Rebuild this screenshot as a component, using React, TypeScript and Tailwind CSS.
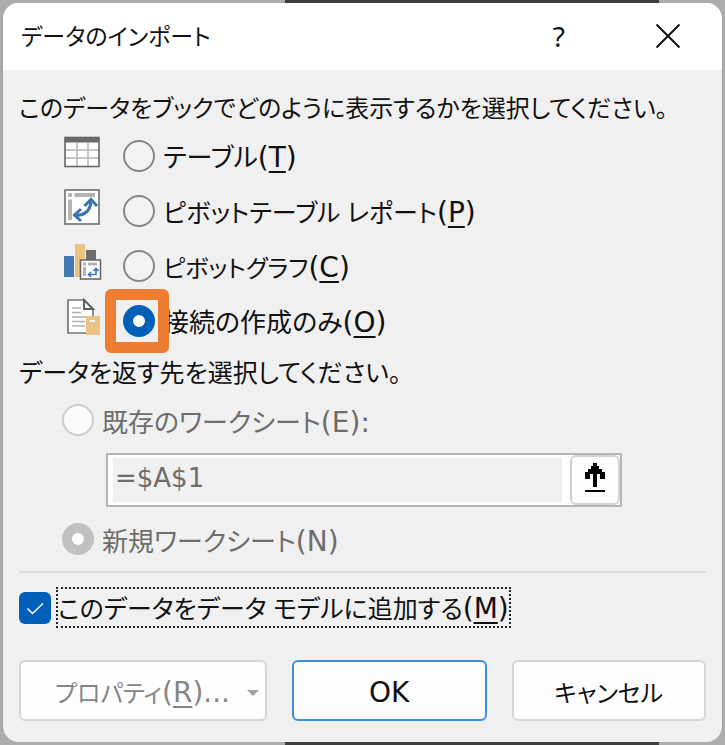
import type { ReactNode } from 'react';

const radioBase =
  'h-8 w-8 shrink-0 appearance-none rounded-full border-2 border-[#868686] bg-[#f2f2f2] checked:border-[10px] checked:border-[#005fb8] checked:bg-white disabled:border-[#cccccc] disabled:bg-[#fbfbfb] disabled:checked:border-[#c0c0c0] disabled:checked:bg-white';

function Latin({ children }: { children: ReactNode }) {
  return <span className="font-['DejaVu_Sans',sans-serif] text-[28px] leading-none">{children}</span>;
}

function Key({ children }: { children: ReactNode }) {
  return <span className="underline decoration-2 underline-offset-4">{children}</span>;
}

function TableIcon() {
  return (
    <svg width="36" height="32" viewBox="0 0 36 32" aria-hidden="true">
      <rect x="1" y="1.5" width="34" height="29" fill="#fff" />
      <path d="M1 14H35M1 22H35M13 7V30M24 7V30" stroke="#b5b5b5" strokeWidth="1.5" />
      <rect x="1" y="1.5" width="34" height="29" fill="none" stroke="#686868" strokeWidth="1.6" />
      <rect x="1" y="1.5" width="34" height="5" fill="#686868" />
    </svg>
  );
}

function PivotTableIcon() {
  return (
    <svg width="36" height="36" viewBox="0 0 36 36" aria-hidden="true">
      <rect x="1" y="1" width="34" height="34" fill="#fff" stroke="#767676" strokeWidth="1.7" />
      <path d="M4 4H8V8H4ZM10.500 4H31V8H10.500ZM4 10.500H8V31H4Z" fill="#b3b3b3" />
      <path d="M11 26C20 27 27 22 27 11M20.500 17L27 10.500L33 17M17 20L10.500 26L17 32" fill="none" stroke="#3b74b1" strokeWidth="3" />
    </svg>
  );
}

function PivotChartIcon() {
  return (
    <svg width="38" height="38" viewBox="0 0 38 38" aria-hidden="true">
      <rect x="0" y="13" width="10" height="21" fill="#4478b2" />
      <rect x="11" y="1" width="10" height="33" fill="#eac282" />
      <rect x="22" y="7" width="10" height="10" fill="#6c6c6c" />
      <rect x="16.500" y="17" width="20" height="19" fill="#fff" stroke="#686868" strokeWidth="1.6" />
      <path d="M19 19.500H22V22.500H19ZM24 19.500H33V22.500H24ZM19 24H22V33H19Z" fill="#b3b3b3" />
      <path d="M25 31.500H32V26M29.500 28L32 25.500L34.500 28M27 29L24.500 31.500L27 34" fill="none" stroke="#3b74b1" strokeWidth="1.6" />
    </svg>
  );
}

function ConnectionIcon() {
  return (
    <svg width="36" height="38" viewBox="0 0 36 38" aria-hidden="true">
      <path d="M4 2H20L29 11V35H4Z" fill="#fff" stroke="#767676" strokeWidth="1.7" />
      <path d="M20 2V11H29Z" fill="#fff" stroke="#5f5f5f" strokeWidth="2" />
      <path d="M8 10H17M8 14.500H17M8 19H25M8 23.500H21M8 28H21" stroke="#b0b0b0" strokeWidth="1.5" />
      <rect x="22" y="18" width="14" height="19" fill="#eac282" />
      <path d="M26 23H31" stroke="#fff" strokeWidth="1.7" />
    </svg>
  );
}

function Option({ id, icon, checked, children, highlighted }: { id: string; icon: ReactNode; checked?: boolean; children: ReactNode; highlighted?: boolean }) {
  return (
    <div className="flex h-[55px] items-center pl-[45px]">
      <div className="flex w-[59px] -translate-y-1">{icon}</div>
      <div className="relative flex">
        <input id={id} type="radio" name="view" defaultChecked={checked} className={radioBase} />
        {highlighted && (
          <span className="pointer-events-none absolute -inset-4 -left-[18px] -right-[14px] z-10 rounded-md border-[11px] border-[#ed7d31]" />
        )}
      </div>
      <label htmlFor={id} className="pl-2 pt-1">{children}</label>
    </div>
  );
}

export default function App() {
  return (
    <div className="flex flex-col bg-[#acacac] p-[3px] font-['Noto_Sans','Noto_Sans_CJK_JP',sans-serif] text-[24px] leading-8 text-[#111] [font-feature-settings:'palt'] bg-[linear-gradient(90deg,#acacac_285px,#3c3e40_285px,#3c3e40_659px,#acacac_659px)]">
      <main className="-mx-px overflow-hidden rounded-2xl border-x border-[#a0a0a0] bg-[#f0f0f0]">
        <header className="flex h-[67px] items-center bg-white pb-0.5 pl-[18px] pr-[41px]">
          <h1 className="grow text-[23px]">データのインポート</h1>
          <button type="button" aria-label="ヘルプ" className="mr-[90px] text-[28px]">?</button>
          <button type="button" aria-label="閉じる">
            <svg width="26" height="26" viewBox="0 0 26 26"><path d="M1.500 1.500L24.500 24.500M24.500 1.500L1.500 24.500" stroke="#111" strokeWidth="2" /></svg>
          </button>
        </header>

        <form className="px-4 pb-[21px] pt-[18px]">
          <fieldset>
            <legend className="flex h-10 items-center whitespace-nowrap">このデータをブックでどのように表示するかを選択してください。</legend>
            <Option id="table" icon={<TableIcon />}><span className="text-[26px]">テーブル</span><Latin>(<Key>T</Key>)</Latin></Option>
            <Option id="pivot-table" icon={<PivotTableIcon />}><span className="text-[25px]">ピボットテーブル レポート</span><Latin>(<Key>P</Key>)</Latin></Option>
            <Option id="pivot-chart" icon={<PivotChartIcon />}>ピボットグラフ<Latin>(<Key>C</Key>)</Latin></Option>
            <Option id="connection" icon={<ConnectionIcon />} checked highlighted><span className="text-[26px]">接続の作成のみ</span><Latin>(<Key>O</Key>)</Latin></Option>
          </fieldset>

          <fieldset>
            <legend className="flex h-12 items-center whitespace-nowrap text-[25px]">データを返す先を選択してください。</legend>
            <div className="flex h-12 items-center pl-[43px] text-[#6d6d6d]">
              <input id="existing" type="radio" name="place" disabled className={radioBase} />
              <label htmlFor="existing" className="pl-2 pt-1"><span className="text-[26px]">既存のワークシート</span><Latin>(E):</Latin></label>
            </div>
            <div className="ml-[87px] mr-[84px] mt-[9px] flex h-[54px] border-2 border-[#b4b4ba] bg-white">
              <input type="text" aria-label="セル参照" disabled defaultValue="=$A$1" className="my-[3px] ml-[5px] mr-2 min-w-0 grow bg-[#f0f0f0] px-0.5 pb-1 font-['DejaVu_Sans',sans-serif] text-[26px] text-[#6d6d6d]" />
              <button type="button" aria-label="ダイアログを折りたたむ" className="flex w-[50px] items-center justify-center rounded-md border-2 border-[#d2d2d2] bg-[#fdfdfd] pb-1">
                <svg width="20" height="30" viewBox="0 0 20 30" shapeRendering="crispEdges">
                  <path d="M8 0H12V3H14V6H17V9H20V16H15V11H12V24H8V11H5V16H0V9H3V6H6V3H8ZM0 27H20V29H0Z" fill="#000" />
                </svg>
              </button>
            </div>
            <div className="flex h-16 items-center pl-[43px] text-[#6d6d6d]">
              <input id="new" type="radio" name="place" disabled defaultChecked className={radioBase} />
              <label htmlFor="new" className="pl-2 pt-1"><span className="text-[26px]">新規ワークシート</span><Latin>(N)</Latin></label>
            </div>
          </fieldset>

          <hr className="border-t-2 border-[#dcdcdc]" />

          <div className="mt-[14px] flex h-[41px] items-center">
            <div className="relative flex">
              <input id="model" type="checkbox" defaultChecked className="h-8 w-8 appearance-none rounded-md bg-[#005fb8]" />
              <svg className="pointer-events-none absolute inset-0" width="32" height="32" viewBox="0 0 32 32"><path d="M8.500 16.500L13.500 21.500L24 11.500" fill="none" stroke="#fff" strokeWidth="1.6" /></svg>
            </div>
            <label htmlFor="model" className="ml-[5px] flex h-full items-center border-2 border-dotted border-[#222] text-[25px]"><span className="whitespace-pre">このデータをデータ モデルに追加する<Latin>(<Key>M</Key>)</Latin></span></label>
          </div>

          <div className="mt-8 flex h-[61px] gap-[25px]">
            <button type="button" disabled className="flex w-[248px] items-center justify-between rounded-md border-2 border-[#d6d6d6] bg-[#fdfdfd] pl-[34px] pr-1.5 pt-1 text-[#858585]">
              <span className="whitespace-nowrap">プロパティ<Latin>(<Key>R</Key>)...</Latin></span>
              <svg width="12" height="8" viewBox="0 0 12 8"><path d="M0 1H12L6 7Z" fill="#a0a0a0" /></svg>
            </button>
            <button type="button" className="flex-1 rounded-md border-2 border-[#3c8fd9] bg-[#fdfdfd] pt-1"><Latin>OK</Latin></button>
            <button type="button" className="flex-1 rounded-md border-2 border-[#d6d6d6] bg-[#fdfdfd] pt-1">キャンセル</button>
          </div>
        </form>
      </main>
    </div>
  );
}
